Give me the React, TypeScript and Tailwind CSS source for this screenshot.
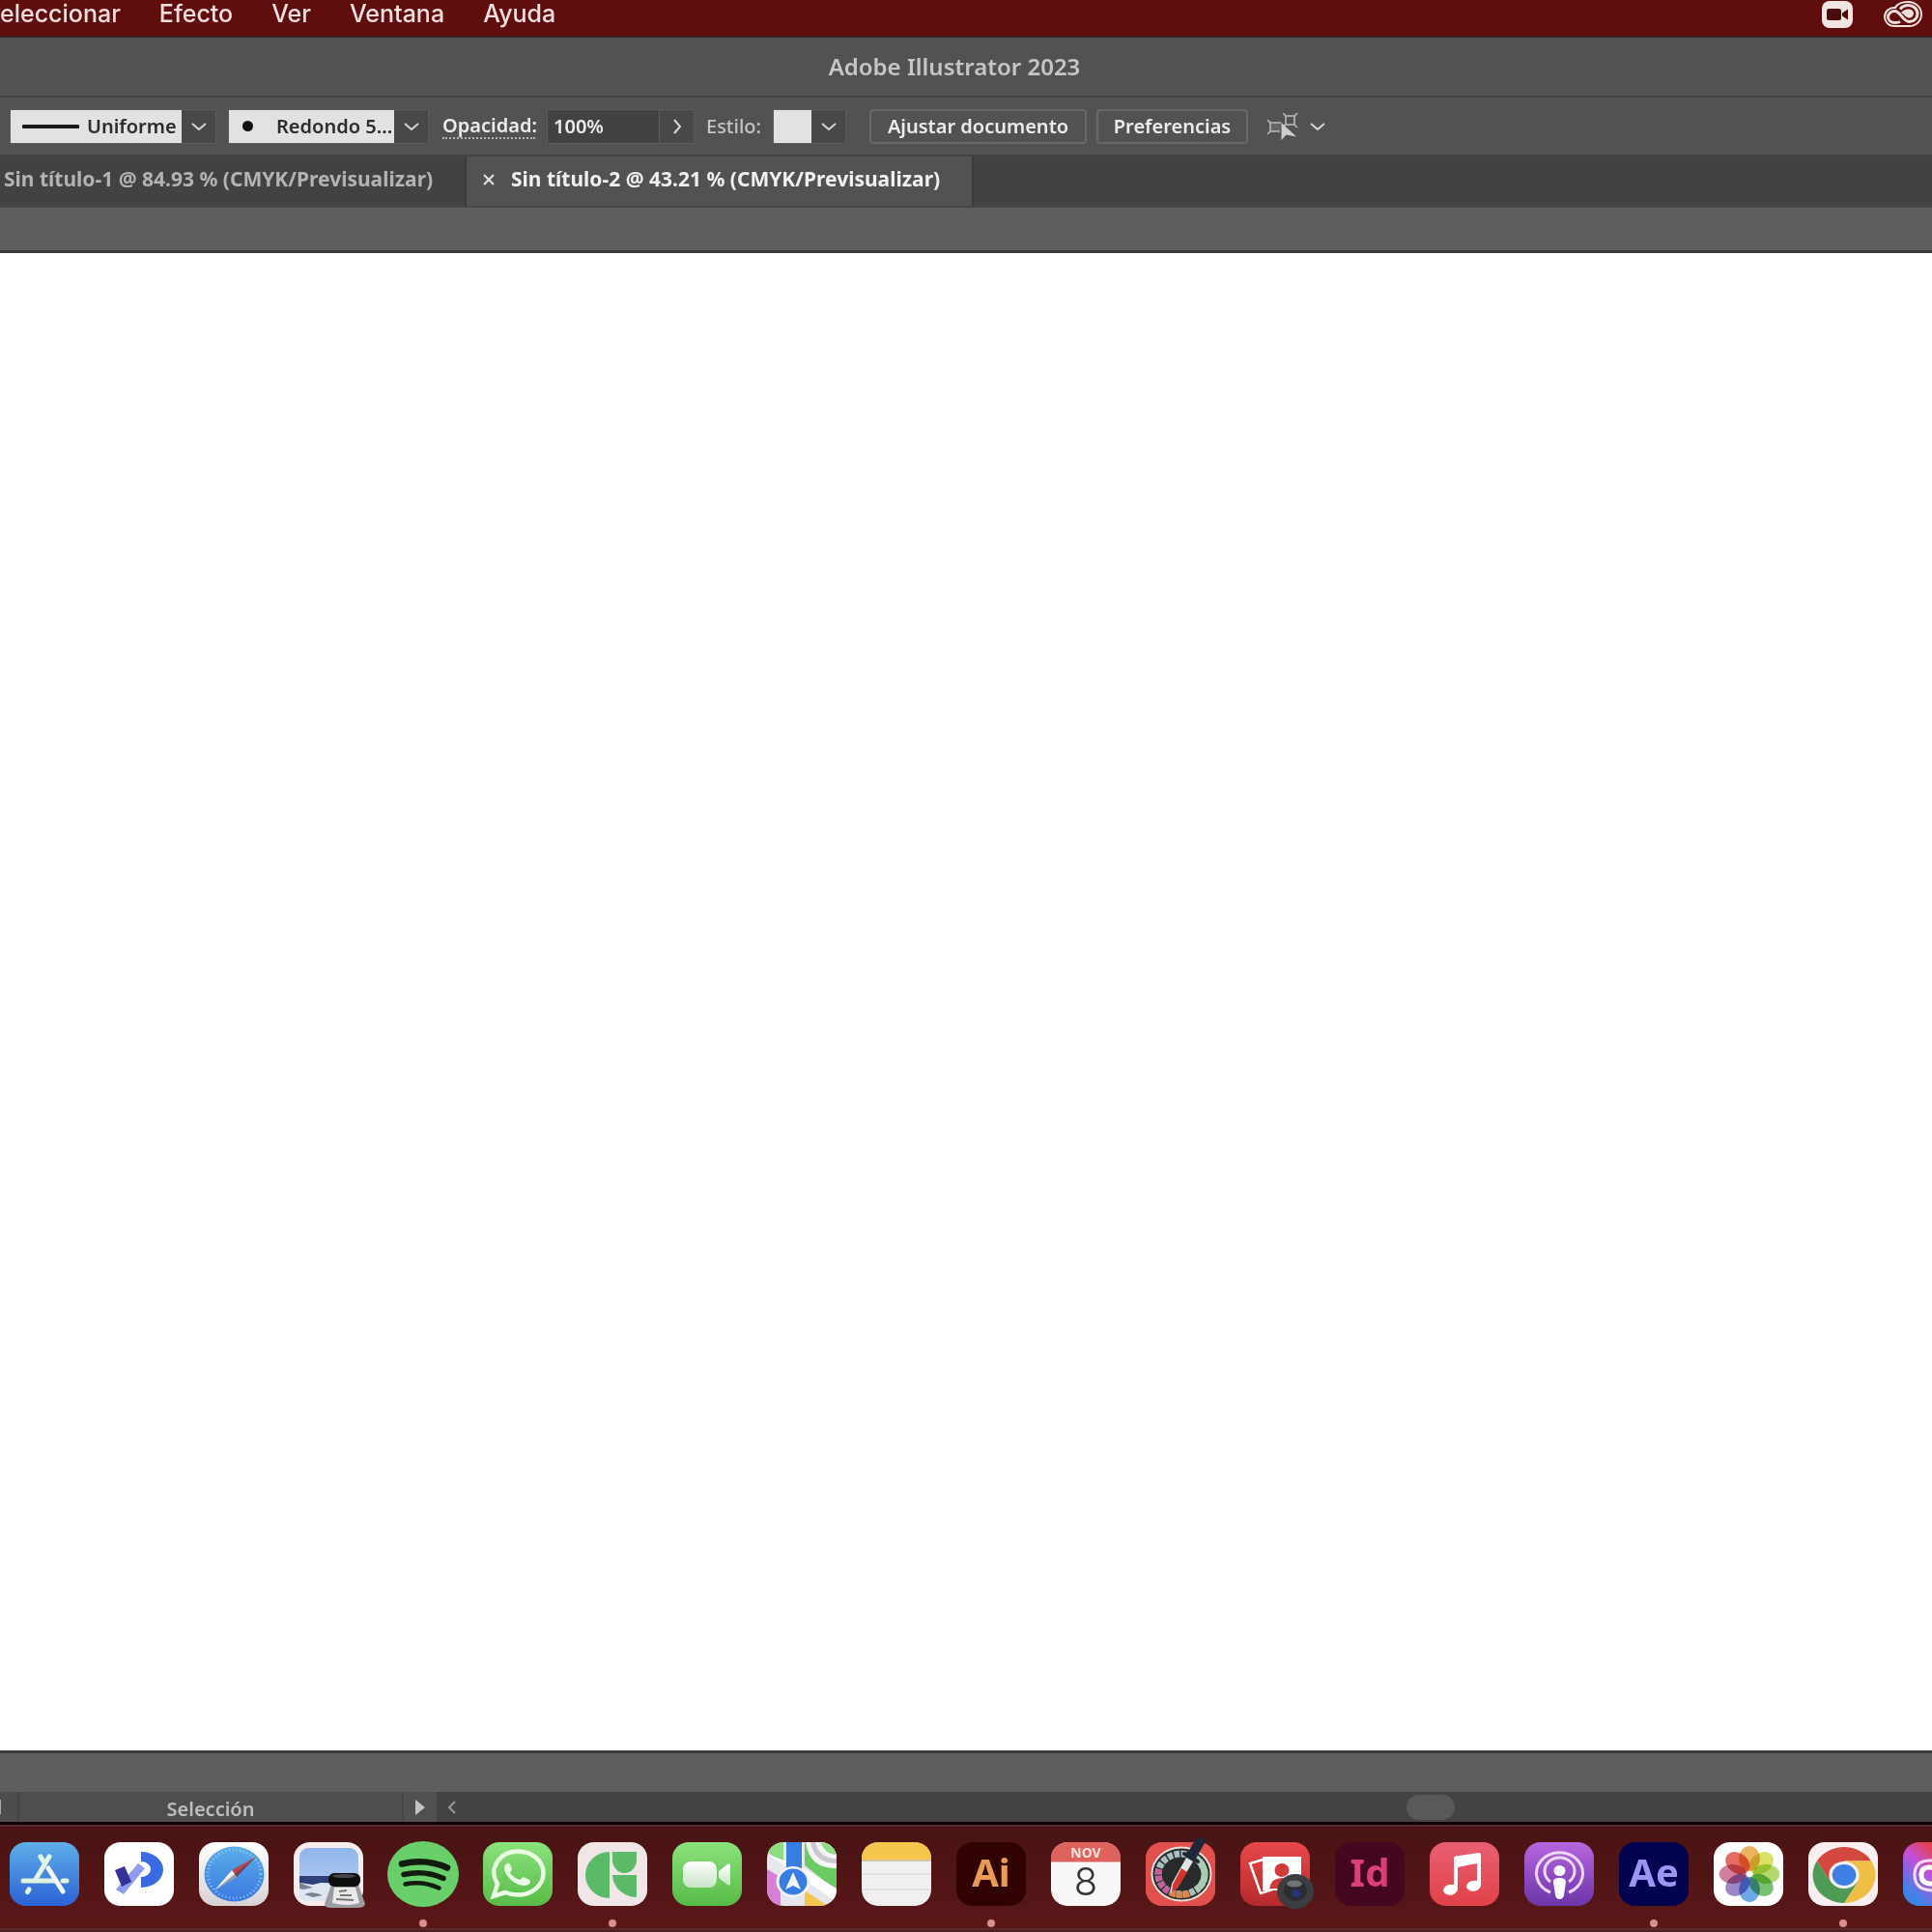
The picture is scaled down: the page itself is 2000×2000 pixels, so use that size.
import React from "react";

const menus = ["eleccionar", "Efecto", "Ver", "Ventana", "Ayuda"];

const ChevronDown = () => (
  <svg className="w-4 h-3" viewBox="0 0 16 12" fill="none" stroke="#d8d8d8" strokeWidth="2">
    <path d="M1 3l7 6 7-6" />
  </svg>
);

const ZoomIcon = () => (
  <svg className="w-8 h-[30px]" viewBox="0 0 32 30">
    <rect x="0" y="1" width="32" height="28" rx="8" fill="#f3e4e4" />
    <rect x="5" y="9" width="15" height="12" rx="2.500" fill="#4d0c0c" />
    <path d="M21 13.500l6-4v11l-6-4z" fill="#4d0c0c" />
  </svg>
);

const CreativeCloudIcon = () => (
  <svg className="w-10 h-[30px]" viewBox="0 0 40 30" fill="none">
    <path
      d="M11 27C5 27 1 22.500 1 17.500S5 7.500 12 8C14 4 19 2 25 2c8 0 14 5.500 14 12.500S34 27 26 27z"
      fill="#5f0d0d"
      stroke="#f3dede"
      strokeWidth="2"
    />
    <path
      d="M17 22.500q-2 1-5 1c-5 0-7.500-3-7.500-6s3-6 7-6c6 0 8 11 15 11 5 0 8.500-4 8.500-8.500S31 5.500 25.500 5.500c-4 0-7 2-8.500 4"
      stroke="#f3dede"
      strokeWidth="3"
    />
    <path d="M18 13q3-3.500 7-3.500c4 0 6 2 6 4.500s-2 4.500-4.500 4.500c-4 0-5-4-8.500-5.500z" fill="#f3dede" />
  </svg>
);

const SelectSimilarIcon = () => (
  <svg className="w-8 h-7" viewBox="0 0 32 28" fill="none" stroke="#b9b9b9" strokeWidth="1.600">
    <rect x="19" y="3" width="9" height="9" />
    <path d="M16 0l3 3M31 0l-3 3M31 15l-3-3M19 12l-3 2" />
    <path d="M14 10H3v9h10M0 7l3 3M0 22l3-3" fill="#666" />
    <path d="M14.500 10v18l5-5.500 10.500 2z" fill="#cfcfcf" stroke="none" />
  </svg>
);

/* Dock icons, all drawn on a 72x66 tile */
const Tile = ({ fill }: { fill: string }) => <rect width="72" height="66" rx="17" ry="16" fill={fill} />;

const AppStore = () => (
  <>
    <Tile fill="url(#gStore)" />
    <g stroke="#e2f4df" strokeWidth="5" strokeLinecap="round">
      <path d="M41 15L26 40M32 15l3 5M20 49l-1.500 2.500M14 40h33M55 40h4" />
      <path d="M40 27l15 24" stroke="#f1f6ff" />
    </g>
  </>
);

const PApp = () => (
  <>
    <Tile fill="#fff" />
    <path d="M35 22l7 5-22 27-8-5z" fill="#8f9df0" />
    <path d="M11 29l10-4 7 16-10 5z" fill="#35309a" />
    <path d="M38 10A23 18.500 0 0 1 38 47V36A10 8 0 0 0 38 20z" fill="#3a6ae0" />
  </>
);

const Safari = () => (
  <>
    <Tile fill="url(#gSafariTile)" />
    <ellipse cx="36.500" cy="33" rx="31" ry="28.500" fill="url(#gSafari)" />
    <ellipse cx="36.500" cy="33" rx="27.500" ry="25" fill="none" stroke="#a5d5f7" strokeWidth="3" strokeDasharray="0.800 3" />
    <path d="M59 15L34 29l5 7z" fill="#b8484f" />
    <path d="M16 50l18-21 5 7z" fill="#e9f2ec" />
    <path d="M59 15L39 36 16 50l21-17z" fill="#23375c" opacity="0.450" />
  </>
);

const Preview = () => (
  <>
    <Tile fill="#f9ecec" />
    <rect x="6" y="6" width="61" height="55" rx="9" fill="url(#gSky)" />
    <path d="M6 35h61v9H6z" fill="#2f4079" />
    <path d="M6 42l14 2 8-2 39 1v13q0 5-5 5H14q-8 0-8-7z" fill="#dfe6f1" />
    <path d="M6 42q8 3 14 5l-10 2-4-1zM11 54q8-4 19 1l-10 2z" fill="#7b8190" />
    <path d="M39 44h28l7 20q-1 4-8 4H39q-7 0-7-4z" fill="#9b9ba0" />
    <path d="M42 47h22l4 16q-12 4-28 0z" fill="#e9e9ec" />
    <path d="M47 51l8-1M48 55h12M44 59l18 1" stroke="#777" strokeWidth="2" />
    <rect x="36" y="32" width="33" height="14" rx="6" fill="#0d0d10" />
    <ellipse cx="52" cy="35" rx="12" ry="2" fill="#45454a" />
  </>
);

const Spotify = () => (
  <>
    <ellipse cx="36" cy="33" rx="37" ry="34" fill="#68cf6b" />
    <g fill="none" stroke="#111c0e" strokeLinecap="round">
      <path d="M14 22.500q25-6 47 4" strokeWidth="6.500" />
      <path d="M16 33.500q22-5 41 4" strokeWidth="5.500" />
      <path d="M17.500 43.500q18-4 35 4" strokeWidth="4.500" />
    </g>
  </>
);

const WhatsApp = () => (
  <>
    <Tile fill="url(#gGreen)" />
    <path
      d="M11 56l4-13C5 28 17 9.500 36 9.500c15 0 26.500 10 26.500 22.500S51 54.500 36 54.500c-5 0-9-1-13-2.500z"
      fill="none"
      stroke="#eafbe4"
      strokeWidth="4.500"
    />
    <path d="M22 27c0-4 4-7 6-4l2 5-2 4q4 5 10 7l4-3 6 3c3 2-1 6-5 6C33 45 22 34 22 27z" fill="#eafbe4" />
  </>
);

const Goodnotes = () => (
  <>
    <Tile fill="#f0e6e7" />
    <g fill="#5bba68">
      <path d="M33 10A25 24 0 0 0 33 58z" />
      <path d="M36 10h25v8a12.500 14 0 0 1-25 0z" />
      <path d="M36 34h25v23A25 24 0 0 1 36 34z" />
    </g>
  </>
);

const FaceTime = () => (
  <>
    <Tile fill="url(#gGreen)" />
    <rect x="11" y="20" width="35" height="27" rx="8" fill="url(#gWhite)" />
    <path d="M48 30l9-7q3-2 3 1v19q0 3-3 1l-9-7z" fill="url(#gWhite)" />
  </>
);

const Maps = () => (
  <g clipPath="url(#tileClip)">
    <Tile fill="#e6e6ec" />
    <path d="M0 0h17v23L0 10z" fill="#8edd82" />
    <path d="M0 28l14 8v30H0z" fill="#d57fd5" />
    <path d="M39 0h33v50L39 24z" fill="#68cb63" />
    <path d="M40 0q4 28 32 27V0z" fill="#f4f4f4" />
    <path d="M45 0q4 22 27 22V0z" fill="#c9c9d1" />
    <path d="M50 0q4 17 22 17V0z" fill="#f4f4f4" />
    <path d="M56 0q3 12 16 13V0z" fill="#8edd82" />
    <path d="M0 12l72 50V48L38 27z" fill="#fff" opacity="0.900" />
    <path d="M39 50l24 16H39z" fill="#f4c64b" />
    <path d="M20 0h16v28H20z" fill="#387ee0" />
    <ellipse cx="27" cy="41" rx="17.500" ry="16" fill="#f2f3fa" />
    <ellipse cx="27" cy="41" rx="14.500" ry="13.500" fill="#387ee0" />
    <path d="M27 31l8 18-8-4-8 4z" fill="#f2f5f4" />
  </g>
);

const Notes = () => (
  <g clipPath="url(#tileClip)">
    <Tile fill="#f1efef" />
    <path d="M0 0h72v18H0z" fill="#f4c74c" />
    <path d="M0 19h72" stroke="#c9b88b" strokeWidth="1.500" />
    <path d="M0 33h72M0 49h72" stroke="#dddbdc" strokeWidth="1.500" />
  </g>
);

const Letters = ({ bg, color, text }: { bg: string; color: string; text: string }) => (
  <>
    <Tile fill={bg} />
    <text x="36" y="46" textAnchor="middle" fontSize="40" fontWeight="700" fill={color}>
      {text}
    </text>
  </>
);

const Calendar = () => (
  <g clipPath="url(#tileClip)">
    <Tile fill="#f8f6f6" />
    <path d="M0 0h72v20.500H0z" fill="#de635c" />
    <text x="36" y="16" textAnchor="middle" fontSize="14" fontWeight="700" fill="#fbe4e1">
      NOV
    </text>
    <text x="36" y="55" textAnchor="middle" fontSize="40" fontWeight="300" fill="#333" fontFamily="Inter">
      8
    </text>
  </g>
);

const ColorMeter = () => (
  <>
    <Tile fill="#e2504e" />
    <ellipse cx="37" cy="33" rx="30.500" ry="27.500" fill="#292a2b" stroke="#e8ded6" strokeWidth="2" />
    <ellipse cx="37" cy="33" rx="24" ry="21" fill="none" stroke="#a9bfc0" strokeWidth="7" strokeDasharray="5.500 1.500" />
    <path d="M14 28a24 21 0 0 0 12 24" fill="none" stroke="#c55f99" strokeWidth="7" strokeDasharray="5.500 1.500" />
    <path d="M26 52a24 21 0 0 0 20 1" fill="none" stroke="#dc8445" strokeWidth="7" strokeDasharray="5.500 1.500" />
    <path d="M46 14a24 21 0 0 1 6 36" fill="none" stroke="#a9cfaa" strokeWidth="7" strokeDasharray="5.500 1.500" />
    <ellipse cx="37" cy="33" rx="19" ry="17" fill="#292a2b" />
    <path d="M42 16l7 4-16 27-8 6 2-10z" fill="#dfe3e4" />
    <path d="M37 27l6 4-10 16-6 5 1-8z" fill="#d5332e" />
    <path d="M43 12l8-14q8-6 11 1L52 17z" fill="#202739" />
    <path d="M40 12l14 8" stroke="#202739" strokeWidth="4" strokeLinecap="round" />
  </>
);

const PhotoBooth = () => (
  <>
    <Tile fill="url(#gBooth)" />
    <path d="M27 17L10 22l11 31 12-4" fill="none" stroke="#fff" strokeWidth="2.500" />
    <rect x="23" y="15" width="40" height="35" fill="#fff" />
    <ellipse cx="43" cy="29" rx="7.500" ry="7" fill="#d33b3b" />
    <path d="M30 48q2-11 13-11t13 11z" fill="#d33b3b" />
    <ellipse cx="57" cy="51" rx="19" ry="18" fill="#3b3d40" />
    <ellipse cx="57" cy="50" rx="12" ry="11" fill="#2b2d31" />
    <ellipse cx="58" cy="53" rx="5" ry="4" fill="#26327a" />
    <ellipse cx="56" cy="43" rx="8" ry="3.500" fill="#8d9396" opacity="0.700" />
  </>
);

const Music = () => (
  <>
    <Tile fill="url(#gMusic)" />
    <path d="M25 17q0-2 2-2.500L51 11q2 0 2 2v32a7.500 5.500-12 1 1-4-5V22l-20 4v23a7.500 5.500-12 1 1-4-5z" fill="#fff" />
  </>
);

const Podcasts = () => (
  <>
    <Tile fill="url(#gPod)" />
    <g fill="none" stroke="#ecd7f8" strokeWidth="3">
      <path d="M27 52A24 21.500 0 1 1 46 52" />
      <path d="M27 41A15.500 14 0 1 1 46 41" />
    </g>
    <ellipse cx="36.500" cy="29.500" rx="6" ry="5.500" fill="#fff" />
    <path d="M30 41q0-4 6.500-4t6.500 4l-2 14q-1 4-4.500 4t-4.500-4z" fill="#fff" />
  </>
);

const petals = ["#eba645", "#d3dc48", "#a6d157", "#62b55c", "#5599e3", "#8a72bf", "#c9688f", "#dd5348"];

const Photos = () => (
  <>
    <Tile fill="#fff" />
    <g transform="translate(37 33) scale(1.080 1)" style={{ isolation: "isolate" }}>
      {petals.map((color, i) => (
        <ellipse
          key={color}
          cy="-16"
          rx="10"
          ry="13"
          fill={color}
          opacity="0.850"
          transform={`rotate(${i * 45})`}
          className="mix-blend-multiply"
        />
      ))}
    </g>
  </>
);

const Chrome = () => (
  <>
    <Tile fill="#f9eff0" />
    <g transform="translate(37 34) scale(1.120 1)">
      <path d="M-25.100-14.500A29 29 0 0 1 25.100-14.500H0L-12.500 7.200z" fill="#d5483f" />
      <path d="M25.100-14.500A29 29 0 0 1 0 29L12.600 7.200 0-14.500z" fill="#efbf45" />
      <path d="M0 29A29 29 0 0 1-25.100-14.500L-12.500 7.200H12.600z" fill="#4f9b55" />
      <circle r="14" fill="#f5f1f2" />
      <circle r="11" fill="#3d7fe4" />
    </g>
  </>
);

const CloudApp = () => (
  <>
    <Tile fill="url(#gCloud)" />
    <path d="M32 50q-20 0-20-16t18-15q8-8 20-5t12 17-14 19z" fill="none" stroke="#f3dcf5" strokeWidth="3" />
    <path d="M40 43H27q-8-1-8-9t8-8q7 0 12 9t12 5 2-14-14-2" fill="none" stroke="#fff" strokeWidth="5" />
  </>
);

const dockApps: { name: string; icon: React.ReactNode; open?: boolean }[] = [
  { name: "App Store", icon: <AppStore /> },
  { name: "Editor", icon: <PApp /> },
  { name: "Safari", icon: <Safari /> },
  { name: "Vista Previa", icon: <Preview /> },
  { name: "Spotify", icon: <Spotify />, open: true },
  { name: "WhatsApp", icon: <WhatsApp /> },
  { name: "Apuntes", icon: <Goodnotes />, open: true },
  { name: "FaceTime", icon: <FaceTime /> },
  { name: "Mapas", icon: <Maps /> },
  { name: "Notas", icon: <Notes /> },
  { name: "Illustrator", icon: <Letters bg="#300202" color="#e99a55" text="Ai" />, open: true },
  { name: "Calendario", icon: <Calendar /> },
  { name: "Medidor de color", icon: <ColorMeter /> },
  { name: "Captura de fotos", icon: <PhotoBooth /> },
  { name: "InDesign", icon: <Letters bg="#43071f" color="#dc3f7c" text="Id" /> },
  { name: "Música", icon: <Music /> },
  { name: "Podcasts", icon: <Podcasts /> },
  { name: "After Effects", icon: <Letters bg="#03024f" color="#9a96f2" text="Ae" />, open: true },
  { name: "Fotos", icon: <Photos /> },
  { name: "Chrome", icon: <Chrome />, open: true },
  { name: "Creative Cloud", icon: <CloudApp /> },
];

const Gradient = ({ id, from, to }: { id: string; from: string; to: string }) => (
  <linearGradient id={id} x1="0" y1="0" x2="0" y2="1">
    <stop offset="0" stopColor={from} />
    <stop offset="1" stopColor={to} />
  </linearGradient>
);

const DockDefs = () => (
  <svg className="w-0 h-0" aria-hidden="true">
    <defs>
      <Gradient id="gStore" from="#5faee8" to="#2b62d4" />
      <Gradient id="gSafariTile" from="#ffffff" to="#d9d2d4" />
      <Gradient id="gSafari" from="#5aaee8" to="#3a78e2" />
      <Gradient id="gSky" from="#8fb6ea" to="#bcd0f3" />
      <Gradient id="gGreen" from="#8be27c" to="#57bb47" />
      <Gradient id="gWhite" from="#ffffff" to="#c8e4c6" />
      <Gradient id="gBooth" from="#e8484c" to="#b52a2c" />
      <Gradient id="gMusic" from="#e85f72" to="#e2424a" />
      <Gradient id="gPod" from="#b766df" to="#6c35a8" />
      <linearGradient id="gCloud" x1="1" y1="0" x2="0" y2="1">
        <stop offset="0.300" stopColor="#e8403c" />
        <stop offset="0.550" stopColor="#c44fd8" />
        <stop offset="0.850" stopColor="#3d83e6" />
      </linearGradient>
      <clipPath id="tileClip">
        <rect width="72" height="66" rx="17" ry="16" />
      </clipPath>
    </defs>
  </svg>
);

const MenuBar = () => (
  <header className="flex h-[39px] shrink-0 items-start justify-between border-b-2 border-[#3a2323] bg-[#5f0d0d] pr-2.5">
    <nav className="flex gap-10 font-['Inter'] text-[25px] leading-7 font-medium text-[#f6dfdf]">
      {menus.map((menu) => (
        <a key={menu} href="#">
          {menu}
        </a>
      ))}
    </nav>
    <div className="flex gap-8">
      <ZoomIcon />
      <CreativeCloudIcon />
    </div>
  </header>
);

const ControlBar = () => (
  <div className="flex h-[61px] shrink-0 items-center border-b-2 border-[#434343] bg-[#525252] pl-2.5 text-xl font-semibold text-[#ececec]">
    <label className="flex h-9 w-[214px] items-center border border-[#5c5c5c] bg-[#484848]">
      <span className="flex h-full w-[177px] items-center gap-2 bg-[#e2e2e2] pl-3">
        <svg className="w-[59px] h-1 shrink-0" viewBox="0 0 59 4">
          <rect width="59" height="4" rx="1" fill="#1a1a1a" />
        </svg>
        <select aria-label="Perfil de trazo" className="w-24 appearance-none bg-transparent text-[#2c2c2c] outline-none">
          <option>Uniforme</option>
        </select>
      </span>
      <span className="flex flex-1 justify-center">
        <ChevronDown />
      </span>
    </label>

    <label className="ml-3 flex h-9 w-[208px] items-center border border-[#5c5c5c] bg-[#484848]">
      <span className="flex h-full w-[171px] items-center bg-[#e2e2e2] pl-3.5">
        <span className="mr-6 size-[11px] shrink-0 rounded-full bg-[#111]" />
        <select aria-label="Pincel" className="w-[122px] appearance-none bg-transparent text-[#2c2c2c] outline-none">
          <option>Redondo 5...</option>
        </select>
      </span>
      <span className="flex flex-1 justify-center">
        <ChevronDown />
      </span>
    </label>

    <label htmlFor="opacity" className="ml-3.5 w-24 border-b-2 border-dotted border-[#b5b5b5] leading-6 whitespace-nowrap">
      Opacidad:
    </label>
    <div className="ml-3 flex h-9 w-[153px] border border-[#5c5c5c] bg-[#424242]">
      <input id="opacity" defaultValue="100%" className="w-[115px] bg-transparent pl-1.5 outline-none" />
      <button aria-label="Ajustar opacidad" className="flex flex-1 items-center justify-center border-l border-[#5c5c5c] bg-[#484848]">
        <svg className="w-3 h-4" viewBox="0 0 12 16" fill="none" stroke="#d8d8d8" strokeWidth="2">
          <path d="M3 1l6 7-6 7" />
        </svg>
      </button>
    </div>

    <label htmlFor="style" className="ml-3 w-[57px] font-medium whitespace-nowrap text-[#c4c4c4]">
      Estilo:
    </label>
    <div className="relative ml-3 flex h-9 w-[76px] items-center border border-[#5c5c5c] bg-[#484848]">
      <span className="h-full w-[39px] bg-[#e2e2e2]" />
      <span className="flex flex-1 justify-center">
        <ChevronDown />
      </span>
      <select id="style" className="absolute inset-0 w-full appearance-none bg-transparent outline-none">
        <option aria-label="Estilo por defecto"></option>
      </select>
    </div>

    <button className="ml-6 h-9 w-[225px] rounded border-2 border-[#686868]">Ajustar documento</button>
    <button className="ml-2.5 h-9 w-[157px] rounded border-2 border-[#686868]">Preferencias</button>
    <button aria-label="Seleccionar objetos similares" className="ml-5 flex items-center gap-3">
      <SelectSimilarIcon />
      <ChevronDown />
    </button>
  </div>
);

const TabBar = () => (
  <div role="tablist" className="flex h-[53px] shrink-0 border-b-2 border-[#474747] bg-[#424242] text-[21px] font-bold whitespace-nowrap">
    <button role="tab" className="w-[483px] border-r-2 border-[#3b3b3b] pb-1 pl-1 text-left text-[#b3b3b3]">
      Sin título-1 @ 84.93 % (CMYK/Previsualizar)
    </button>
    <button role="tab" aria-selected="true" className="flex w-[525px] items-center gap-4 border-r-2 border-[#3b3b3b] bg-[#525252] pb-1 pl-4 text-[#f0f0f0]">
      <svg className="w-3.5 h-3.5 shrink-0" viewBox="0 0 14 14" stroke="#e4e4e4" strokeWidth="2">
        <path d="M2 2l10 10M12 2L2 12" />
      </svg>
      Sin título-2 @ 43.21 % (CMYK/Previsualizar)
    </button>
  </div>
);

const StatusBar = () => (
  <footer className="flex h-[31px] shrink-0 items-stretch bg-[#434343] text-xl font-semibold text-[#bdbdbd]">
    <div className="w-5 border-r-2 border-[#434343] bg-[#4d4d4d] py-2">
      <div className="h-full w-px bg-[#aaa]" />
    </div>
    <div className="w-[396px] bg-[#4e4e4e] text-center leading-9">Selección</div>
    <button aria-label="Estado" className="flex w-9 items-center justify-center border-l-2 border-[#464646] bg-[#505050]">
      <svg className="w-2.5 h-4" viewBox="0 0 10 16">
        <path d="M0 0l10 8-10 8z" fill="#c4c4c4" />
      </svg>
    </button>
    <button aria-label="Desplazar a la izquierda" className="flex w-8 items-center justify-center">
      <svg className="w-2.5 h-3.5" viewBox="0 0 10 14" fill="none" stroke="#999" strokeWidth="2">
        <path d="M8 1L2 7l6 6" />
      </svg>
    </button>
    <div className="flex flex-1 items-center pl-1">
      <div className="w-[64%]" />
      <div className="h-[26px] w-[50px] rounded-full bg-[#595959]" />
    </div>
  </footer>
);

const Dock = () => (
  <div className="h-[114px] shrink-0 overflow-hidden border-t-[3px] border-[#0f0505] bg-[#4a2020]">
    <div className="h-[109px] border-y-2 border-[#5c2a2b] bg-linear-to-b from-[#481314] to-[#5b1718] pt-4 pl-2.5">
      <div className="flex gap-[26px] font-['Noto_Sans',sans-serif]">
        {dockApps.map((app) => (
          <button key={app.name} aria-label={app.name} className="flex w-[72px] shrink-0 flex-col items-center gap-3.5">
            <svg className="h-[66px] w-[72px] overflow-visible" viewBox="0 0 72 66">
              {app.icon}
            </svg>
            {app.open && <span className="size-2 rounded-full bg-[#dc8d90]" />}
          </button>
        ))}
      </div>
    </div>
  </div>
);

const App: React.FC = () => {
  return (
    <div className="flex h-screen flex-col overflow-hidden bg-[#525252] font-['Noto_Sans',sans-serif]">
      <MenuBar />
      <h1 className="flex h-[62px] shrink-0 items-center justify-center border-b-2 border-[#434343] pr-6 text-2xl font-semibold text-[#c6c6c6]">
        Adobe Illustrator 2023
      </h1>
      <ControlBar />
      <TabBar />
      {/* Work area with the artboard */}
      <main className="flex flex-1 flex-col bg-[#5e5e5e] pt-11 pb-10">
        <div className="flex-1 border-y-[3px] border-[#3a3a3a] bg-white" />
      </main>
      <StatusBar />
      <Dock />
      <div className="absolute">
        <DockDefs />
      </div>
    </div>
  );
};

export default App;
